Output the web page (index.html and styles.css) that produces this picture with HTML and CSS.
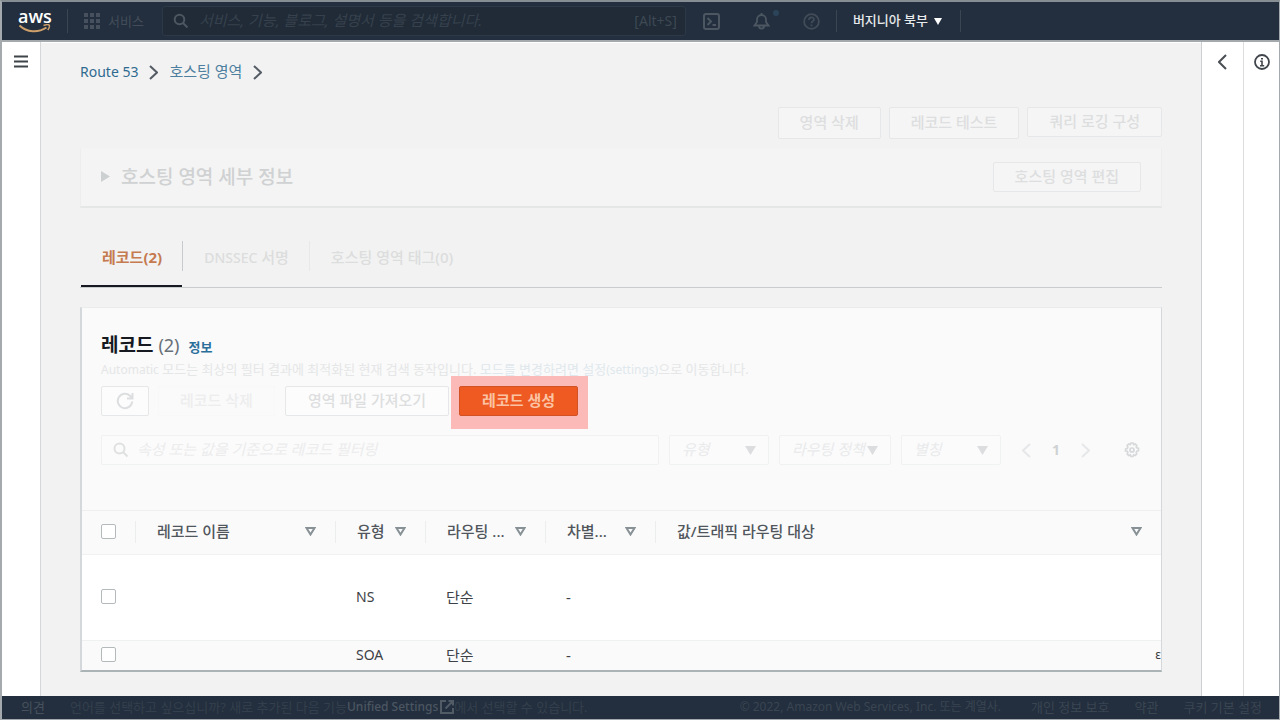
FILE: index.html
```html
<!DOCTYPE html>
<html lang="ko">
<head>
<meta charset="utf-8">
<meta name="viewport" content="width=device-width, initial-scale=1">
<title>Route 53 - 호스팅 영역</title>
<link rel="stylesheet" href="styles.css">
</head>
<body>
<div class="page">
  <header class="topbar">
    <a class="logo" href="#" aria-label="AWS 홈"><span class="logo-text">aws</span>
      <svg class="logo-smile" width="34" height="10" viewBox="0 0 34 10" fill="none" stroke="#cfa06a" stroke-width="2"><path d="M1.500 1.500C9 8.500 20 9 28.500 3.500"/><path d="M25.500 1.500c3-1 5-1 5.700-.4.600.8 0 2.900-1.400 4.900" stroke-width="1.500"/></svg>
    </a>
    <button class="services" type="button">
      <svg width="16" height="16" viewBox="0 0 16 16" fill="#46515d"><path d="M0 0h4v4H0zM6 0h4v4H6zM12 0h4v4h-4zM0 6h4v4H0zM6 6h4v4H6zM12 6h4v4h-4zM0 12h4v4H0zM6 12h4v4H6zM12 12h4v4h-4z"/></svg>
      <span>서비스</span>
    </button>
    <label class="global-search">
      <svg width="16" height="16" viewBox="0 0 16 16" fill="none" stroke="#4c5762" stroke-width="2"><circle cx="6.500" cy="6.500" r="4.800"/><path d="M10 10l4.500 4.500"/></svg>
      <input type="search" aria-label="검색" placeholder="서비스, 기능, 블로그, 설명서 등을 검색합니다.">
      <span class="shortcut">[Alt+S]</span>
    </label>
    <nav class="tools" aria-label="도구">
      <button type="button" aria-label="CloudShell"><svg width="17" height="17" viewBox="0 0 17 17" fill="none" stroke="#4c5762" stroke-width="2"><rect x="1" y="1" width="15" height="15" rx="2"/><path d="M4.500 5l3.500 3.500L4.500 12M9.500 12H13"/></svg></button>
      <button type="button" class="bell" aria-label="알림"><svg width="17" height="17" viewBox="0 0 17 17" fill="none" stroke="#4c5762" stroke-width="1.800"><path d="M8.500 0v2M1.500 12.500L4 9V6.500a4.500 4.500 0 0 1 9 0V9l2.500 3.500zM6 13c0 3.500 5 3.500 5 0"/></svg><span class="dot"></span></button>
      <button type="button" aria-label="도움말"><svg width="17" height="17" viewBox="0 0 17 17" fill="none" stroke="#414c58" stroke-width="1.800"><circle cx="8.500" cy="8.500" r="7.400"/><path d="M6 7c0-3.500 5-3.400 5-.5 0 1.800-2.500 1.800-2.500 3.700M8.500 11.500v1.800"/></svg></button>
    </nav>
    <button class="region" type="button"><span>버지니아 북부</span><svg width="8" height="7" viewBox="0 0 8 7" fill="#fff"><path d="M0 0h8L4 7z"/></svg></button>
  </header>

  <div class="body">
    <aside class="rail rail-left">
      <button type="button" aria-label="메뉴"><svg width="14" height="13" viewBox="0 0 14 13" stroke="#3f4448" stroke-width="2"><path d="M0 1.500h14M0 6.500h14M0 11.500h14"/></svg></button>
    </aside>

    <main class="main">
      <nav class="crumbs" aria-label="이동 경로">
        <a class="crumb-latin" href="#">Route 53</a>
        <svg width="9" height="15" viewBox="0 0 9 15" fill="none" stroke="#545b64" stroke-width="2"><path d="M1 1l7 6.500L1 14"/></svg>
        <a href="#">호스팅 영역</a>
        <svg width="9" height="15" viewBox="0 0 9 15" fill="none" stroke="#545b64" stroke-width="2"><path d="M1 1l7 6.500L1 14"/></svg>
      </nav>

      <div class="actions">
        <button class="btn btn-tall" type="button">영역 삭제</button>
        <button class="btn btn-tall" type="button">레코드 테스트</button>
        <button class="btn" type="button">쿼리 로깅 구성</button>
      </div>

      <section class="details">
        <button class="details-toggle" type="button" aria-expanded="false"><svg width="9" height="11" viewBox="0 0 9 11" fill="#ccd0d1"><path d="M0 0l9 5.500L0 11z"/></svg><span>호스팅 영역 세부 정보</span></button>
        <button class="btn" type="button">호스팅 영역 편집</button>
      </section>

      <div class="tabs" role="tablist">
        <button class="tab tab-active" type="button" role="tab" aria-selected="true">레코드(2)</button>
        <button class="tab" type="button" role="tab"><span><span class="latin">DNSSEC</span> 서명</span></button>
        <button class="tab" type="button" role="tab">호스팅 영역 태그(0)</button>
      </div>

      <section class="card">
        <div class="card-head">
          <div class="title-row">
            <h2>레코드 <span class="count">(2)</span></h2>
            <a class="info" href="#">정보</a>
          </div>
          <p class="hint"><span class="hint-latin">Automatic</span> 모드는 최상의 필터 결과에 최적화된 현재 검색 동작입니다. <span class="hint-link">모드를 변경하려면 설정<span class="hint-latin">(settings)</span></span>으로 이동합니다.</p>
          <div class="record-actions">
            <button class="btn btn-icon" type="button" aria-label="새로 고침"><svg width="18" height="18" viewBox="0 0 18 18" fill="none" stroke="#dcdedf" stroke-width="2"><path d="M16.200 9.500A7.200 7.200 0 1 1 14 3.800L16 6M16.500 1v5.500H11"/></svg></button>
            <button class="btn btn-faint" type="button">레코드 삭제</button>
            <button class="btn" type="button">영역 파일 가져오기</button>
            <span class="spot"><button class="btn btn-primary" type="button">레코드 생성</button></span>
          </div>
          <div class="filters">
            <label class="filter-search">
              <svg width="16" height="16" viewBox="0 0 16 16" fill="none" stroke="#dfe0e1" stroke-width="2"><circle cx="6.500" cy="6.500" r="5"/><path d="M10 10l4.500 4.500"/></svg>
              <input type="search" aria-label="레코드 필터링" placeholder="속성 또는 값을 기준으로 레코드 필터링">
            </label>
            <span class="pick"><select aria-label="유형"><option>유형</option></select><svg width="11" height="9" viewBox="0 0 11 9" fill="#dcdddf"><path d="M0 0h11L5.500 9z"/></svg></span>
            <span class="pick pick-wide"><select aria-label="라우팅 정책"><option>라우팅 정책</option></select><svg width="11" height="9" viewBox="0 0 11 9" fill="#dcdddf"><path d="M0 0h11L5.500 9z"/></svg></span>
            <span class="pick"><select aria-label="별칭"><option>별칭</option></select><svg width="11" height="9" viewBox="0 0 11 9" fill="#dcdddf"><path d="M0 0h11L5.500 9z"/></svg></span>
            <div class="pager">
              <button type="button" aria-label="이전"><svg width="9" height="15" viewBox="0 0 9 15" fill="none" stroke="#e6e7e8" stroke-width="2"><path d="M8 1L1 7.500 8 14"/></svg></button>
              <span class="page-no">1</span>
              <button type="button" aria-label="다음"><svg width="9" height="15" viewBox="0 0 9 15" fill="none" stroke="#e6e7e8" stroke-width="2"><path d="M1 1l7 6.500L1 14"/></svg></button>
            </div>
            <button class="gear" type="button" aria-label="설정"><svg width="16" height="16" viewBox="0 0 16 16" fill="none" stroke="#d6d8d9" stroke-width="1.700"><path d="M6.300 2.600L7 1h2l.7 1.600 1.600-.7 1.500 1.500-.6 1.500.8 1 1.500.4v2.400l-1.600.5-.7 1.400.5 1.400-1.500 1.500-1.500-.7-.7 1.700H7l-.7-1.600-1.600.6-1.500-1.500.7-1.600-.6-1.200L1.500 9V7l1.600-.5.7-1.400-.6-1.600 1.500-1.500z"/><circle cx="8" cy="8" r="2"/></svg></button>
          </div>
        </div>

        <table class="records">
          <colgroup><col class="c-check"><col class="c-name"><col class="c-type"><col class="c-route"><col class="c-diff"><col></colgroup>
          <thead>
            <tr>
              <th><div class="th th-check"><input type="checkbox" aria-label="모두 선택"></div></th>
              <th><div class="th"><span>레코드 이름</span><svg class="sort" width="11" height="9" viewBox="0 0 11 9"><path d="M1.500 1h8l-4 6.500z"/></svg></div></th>
              <th><div class="th"><span>유형</span><svg class="sort" width="11" height="9" viewBox="0 0 11 9"><path d="M1.500 1h8l-4 6.500z"/></svg></div></th>
              <th><div class="th"><span>라우팅 ...</span><svg class="sort" width="11" height="9" viewBox="0 0 11 9"><path d="M1.500 1h8l-4 6.500z"/></svg></div></th>
              <th><div class="th"><span>차별...</span><svg class="sort" width="11" height="9" viewBox="0 0 11 9"><path d="M1.500 1h8l-4 6.500z"/></svg></div></th>
              <th><div class="th th-last"><span>값/트래픽 라우팅 대상</span><svg class="sort" width="11" height="9" viewBox="0 0 11 9"><path d="M1.500 1h8l-4 6.500z"/></svg></div></th>
            </tr>
          </thead>
          <tbody>
            <tr class="row-tall"><td><input type="checkbox" aria-label="NS 레코드 선택"></td><td></td><td class="latin">NS</td><td>단순</td><td>-</td><td></td></tr>
            <tr class="row-short"><td><input type="checkbox" aria-label="SOA 레코드 선택"></td><td></td><td class="latin">SOA</td><td>단순</td><td>-</td><td class="cut">ε</td></tr>
          </tbody>
        </table>
      </section>
    </main>

    <aside class="rail rail-prev">
      <button type="button" aria-label="패널 열기"><svg width="9" height="16" viewBox="0 0 9 16" fill="none" stroke="#4a4f55" stroke-width="2"><path d="M8 1L1 8l7 7"/></svg></button>
    </aside>
    <aside class="rail rail-info">
      <button type="button" aria-label="정보"><svg width="16" height="16" viewBox="0 0 16 16" fill="none" stroke="#41464c"><circle cx="8" cy="8" r="7" stroke-width="1.800"/><path d="M6.200 7.200H8V12M6 11.700h4.200M7 4.700h2" stroke-width="1.600"/></svg></button>
    </aside>
  </div>

  <footer class="footer">
    <a class="feedback" href="#">의견</a>
    <p class="lang">언어를 선택하고 싶으십니까? 새로 추가된 다음 기능<a href="#">Unified Settings <svg width="14" height="14" viewBox="0 0 14 14" fill="none" stroke="#505b66" stroke-width="2"><path d="M6 1H1v12h12V8M8.500 1H13v4.500M13 1L5.500 8.500"/></svg></a>에서 선택할 수 있습니다.</p>
    <span class="copy">© 2022, Amazon Web Services, Inc. 또는 계열사.</span>
    <a href="#">개인 정보 보호</a>
    <a href="#">약관</a>
    <a href="#">쿠키 기본 설정</a>
  </footer>
</div>
</body>
</html>
```
FILE: styles.css
```css
* { box-sizing: border-box; }
body {
  margin: 0;
  font: 15px/20px "Noto Sans", "Noto Sans CJK KR", sans-serif;
  color: #3d4146;
  background: #f2f2f2;
}
button, input, select { font: inherit; color: inherit; margin: 0; }
button { padding: 0; border: 0; background: none; display: flex; align-items: center; white-space: nowrap; }
a { text-decoration: none; color: inherit; }
svg { flex: none; display: block; }

.page { min-height: 100vh; display: flex; flex-direction: column; border: 2px solid #a3a9ad; border-top-color: #868e94; border-right-width: 1px; }

/* Top bar */
.topbar { display: flex; align-items: center; height: 40px; padding-left: 16px; background: #232f3e; border-bottom: 2px solid #a3a9ac; font-size: 13px; }
.logo { width: 50px; height: 24px; border-right: 1px solid #3b4653; display: flex; flex-direction: column; color: #fff; }
.logo-text { font: 600 18px/14px "Open Sans", "Noto Sans", sans-serif; }
.logo-smile { margin-top: 1px; }
.services { gap: 8px; margin-left: 16px; padding-bottom: 1px; color: #424d59; }
.global-search { flex: 0 1 524px; display: flex; align-items: center; gap: 10px; height: 30px; margin-left: 18px; padding: 0 8px 0 10px; border: 1px solid #2d3946; border-radius: 3px; background: #202b37; }
.global-search input { flex: 1; min-width: 0; border: 0; outline: 0; padding: 0 0 2px; background: none; font-size: 15px; font-style: italic; }
.global-search input::placeholder { color: #36414d; opacity: 1; }
.shortcut { color: #3d4853; font-size: 14px; }
.tools { display: flex; align-items: center; gap: 33px; margin-left: 17px; }
.bell { position: relative; }
.dot { position: absolute; left: 20px; top: -3px; width: 6px; height: 6px; border-radius: 50%; background: #2b4459; }
.region { gap: 6px; height: 22px; margin-left: 16px; padding: 0 18px 0 16px; border: solid #3b4653; border-width: 0 1px; color: #e8eaec; font-weight: 500; }
.region span { padding-bottom: 2px; }

/* Shell */
.body { flex: 1; display: flex; }
.rail { background: #fff; padding-top: 11px; display: flex; justify-content: center; align-items: flex-start; }
.rail button { height: 17px; }
.rail-left { flex: 0 0 39px; border-right: 1px solid #d5d7d9; }
.rail-prev { flex: 0 0 42px; border-left: 1px solid #cdd0d2; }
.rail-info { flex: 0 0 36px; border-left: 1px solid #dcdee0; }
.main { flex: 1; min-width: 0; padding: 19px 39px 24px; border-top: 1px solid #fff; }

.crumbs { display: flex; align-items: center; gap: 11px; height: 20px; color: #4d7f9f; }
.crumbs a { padding-bottom: 2px; }
.crumbs .crumb-latin { font-size: 14px; padding-bottom: 0; color: #2f6a90; }

.btn { justify-content: center; height: 30px; padding: 0 21px 2px; border: 1px solid #e6e7e8; border-radius: 2px; background: #f5f5f5; color: #dddedf; font-weight: 500; }
.btn-tall { height: 32px; }
.actions { display: flex; justify-content: flex-end; align-items: flex-start; gap: 8px; margin-top: 25px; height: 32px; }

.details { display: flex; justify-content: space-between; align-items: center; height: 60px; margin-top: 9px; padding: 0 20px 2px; border: 1px solid #ededee; border-top-color: #f3f3f3; border-bottom: 2px solid #e5e6e6; background: #f4f4f4; }
.details-toggle { gap: 11px; font-size: 19px; font-weight: 500; color: #cfd1d2; }

.tabs { display: flex; margin-top: 30px; height: 50px; border-bottom: 1px solid #c9cdce; }
.tab { position: relative; align-items: flex-start; padding: 9px 21px 0; font-weight: 500; font-size: 15px; color: #dcdddd; }
.tab::after { content: ""; position: absolute; right: 0; top: 3px; height: 30px; border-right: 1px solid #e7e8e8; }
.tab:last-child::after { display: none; }
.tab-active { color: #c57a50; font-weight: 700; margin-left: 1px; }
.tab-active::after { border-color: #c8cbcd; }
.tab-active::before { content: ""; position: absolute; left: 0; right: 1px; bottom: 0; height: 2px; background: #16191f; }

/* Records card */
.card { margin: 19px 0 0; border: 1px solid #d4d8da; border-left-width: 2px; border-top-color: #eaebeb; border-bottom: 2px solid #aab3b5; background: #fafafa; }
.card-head { padding: 25px 20px 45px 19px; }
.card .btn { padding: 0 22px 2px; background: #fcfcfc; }
.title-row { display: flex; align-items: baseline; gap: 9px; height: 24px; }
h2 { margin: 0; font-size: 19px; line-height: 24px; font-weight: 700; color: #16191f; }
.count { font-size: 18px; font-weight: 400; color: #687078; }
.info { font-size: 13px; font-weight: 700; color: #2a6f9b; }
.hint { margin: 0; font-size: 13px; line-height: 20px; padding-top: 2px; color: #e5e6e7; white-space: nowrap; }
.hint-latin { font-size: 12px; }
.hint-link { color: #dfe8ed; }
.record-actions { display: flex; margin-top: 6px; }
.card .btn-icon { width: 48px; padding: 0; margin-right: 9px; }
.card .btn-faint { padding: 0 21px 2px; color: #ededee; border-color: #f8f8f8; margin-right: 10px; background: #fafafa; }
.spot { position: relative; margin-left: 10px; }
.spot::before { content: ""; position: absolute; left: -8px; right: -10px; top: -10px; bottom: -13px; background: #fbb9b8; }
.card .btn-primary { position: relative; background: #ee5a22; border-color: #d15225; color: #fbc3a4; font-weight: 700; }

.filters { display: flex; align-items: center; margin-top: 19px; height: 30px; }
.filter-search { flex: 1; min-width: 0; display: flex; align-items: center; gap: 8px; height: 30px; padding: 0 11px; border: 1px solid #f0f1f1; border-radius: 2px; background: #fbfbfb; }
.filter-search input { flex: 1; min-width: 0; border: 0; outline: 0; padding: 0 0 2px; background: none; font-style: italic; }
.filter-search input::placeholder { color: #ececed; opacity: 1; }
.pick { position: relative; width: 100px; margin-left: 10px; }
.pick-wide { width: 112px; }
.pick select { appearance: none; width: 100%; height: 30px; padding: 0 12px 2px; border: 1px solid #f0f1f1; border-radius: 2px; background: #fbfbfb; color: #e9eaeb; font-style: italic; }
.pick svg { position: absolute; right: 13px; top: 11px; }
.pager { display: flex; align-items: center; gap: 21px; margin-left: 21px; }
.page-no { font-size: 14px; font-weight: 700; color: #cfd1d3; }
.gear { margin: 0 1px 0 34px; }

.records { width: 100%; table-layout: fixed; border-collapse: separate; border-spacing: 0; border-top: 1px solid #efefef; }
.c-check { width: 54px; }
.c-name { width: 200px; }
.c-type { width: 90px; }
.c-route { width: 120px; }
.c-diff { width: 110px; }
th { padding: 0 0 2px; height: 44px; border-bottom: 1px solid #f1f1f1; font-weight: 500; color: #50565c; text-align: left; }
.th { display: flex; align-items: center; justify-content: space-between; height: 22px; padding: 0 19px 0 21px; border-right: 1px solid #eceded; white-space: nowrap; }
.th span { padding-bottom: 1px; }
.th-check { padding-left: 19px; }
.th-last { border-right: 0; }
.sort { fill: none; stroke: #879196; stroke-width: 2; }
td { padding: 0 0 2px 20px; overflow: hidden; }
td:first-child { padding-left: 19px; }
.latin { font-size: 14px; }
.row-tall td { height: 86px; background: #fff; border-bottom: 1px solid #eff0f0; }
.row-short td { height: 29px; }
.row-short .cut { padding-right: 0; font-size: 12px; text-align: right; }
input[type="checkbox"] { appearance: none; display: block; width: 15px; height: 15px; border: 1px solid #b4babc; border-radius: 2px; background: #fff; }

/* Footer */
.footer { display: flex; align-items: center; height: 23px; padding: 0 17px 1px 19px; gap: 25px; background: #232f3e; color: #3a4552; font-size: 13px; white-space: nowrap; }
.footer p { margin: 0; display: flex; align-items: center; flex: 1; color: #333f4c; }
.lang a { display: flex; align-items: center; gap: 2px; color: #4b5662; font-size: 12px; font-weight: 500; }
.feedback { color: #46515d; }
.copy { font-size: 12px; margin-right: 5px; }
```
